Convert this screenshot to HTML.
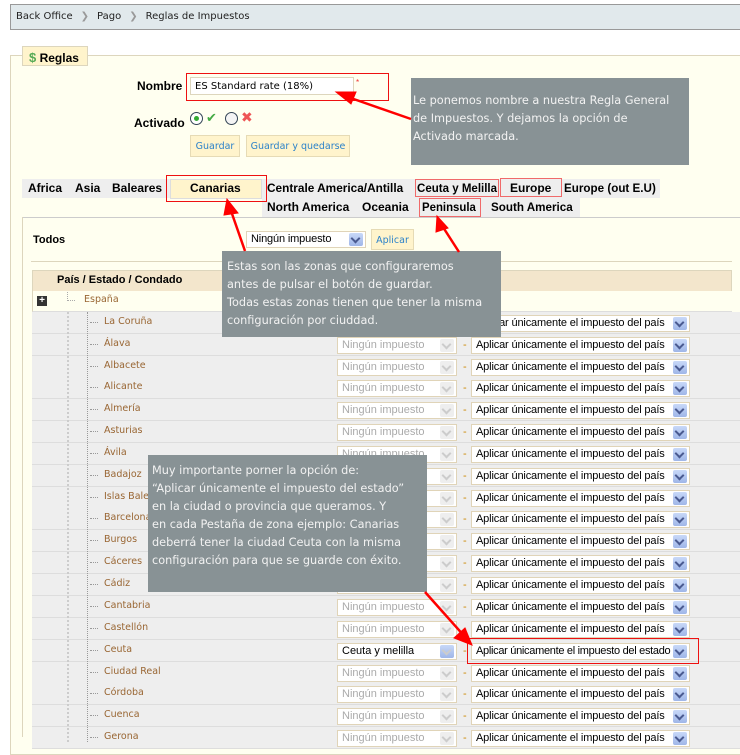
<!DOCTYPE html>
<html><head><meta charset="utf-8"><style>
*{margin:0;padding:0;box-sizing:border-box}
body{width:740px;height:736px;overflow:hidden;background:#fff;font-family:"Liberation Sans","DejaVu Sans",sans-serif;font-size:11px;color:#000;position:relative}
.a{position:absolute}
.bc{left:10px;top:4px;width:740px;height:26px;background:#e1e9ec;border:1px solid #999;border-right:none;font-family:"DejaVu Sans",sans-serif;font-size:10px;padding:6px 0 0 5px;color:#222}
.bc span{color:#999;font-weight:bold;margin:0 8px}
.fs{left:10px;top:55px;width:740px;height:700px;background:#fffff0;border:1px solid #ddd6bd;border-right:none}
.lg{left:22px;top:46px;width:66px;height:20px;background:#fff4cc;border:1px solid #ddd6bd;font-weight:bold;font-size:12px;padding:3px 0 0 6px}
.lbl{font-weight:bold;font-size:12px}
.inp{background:#fff;border:1px solid #ddd6bd;font-family:"DejaVu Sans",sans-serif;font-size:10px;padding:3px 4px}
.btn{background:#fff4cc;border:1px solid #e6dbb5;color:#2c82c9;font-family:"DejaVu Sans",sans-serif;font-size:9.5px;text-align:center;padding-top:5px}
.tip{background:#889295;color:#f2f2f2;font-family:"DejaVu Sans",sans-serif;font-size:11.3px;line-height:18px;white-space:nowrap;overflow:hidden}
.red{border:1.5px solid #ee1111}
.redl{border:1.5px solid #f06a6a}
.tab,.tab2{font-weight:bold;font-size:12px;white-space:nowrap;transform-origin:0 0}
.tab{top:181px}
.tab2{top:200px}
.row{left:32px;width:708px;height:22px;background:#eee;border-bottom:1px solid #ddd}
.pn{position:absolute;left:72px;top:4px;color:#996633;font-family:"DejaVu Sans",sans-serif;font-size:9.5px}
.dash{position:absolute;left:58px;top:10px;width:8px;border-top:1px dotted #999}
.s1{position:absolute;left:305px;top:3px;width:120px;height:17px;background:#fff;border:1px solid #e0d4b8;color:#aaa;font-size:11px;padding:1px 4px}
.s1 i,.s2 i{position:absolute;right:2px;top:1px;width:14px;height:13px;background:#dde;border-radius:2px}
.s1 i{background:#eee}
.s2 i{background:linear-gradient(#c8d8f8,#9fb6e8)}
.s1 i:after,.s2 i:after{content:"";position:absolute;left:3px;top:2px;width:5px;height:5px;border-right:2px solid #4a5a90;border-bottom:2px solid #4a5a90;transform:rotate(45deg)}
.s1 i:after{border-color:#ccc}
.s2{position:absolute;left:439px;top:3px;width:219px;height:17px;background:#fff;border:1px solid #e0d4b8;font-size:11px;padding:1px 4px;white-space:nowrap;overflow:hidden;letter-spacing:-0.15px}
.dh{position:absolute;left:431px;top:5px;color:#c80}
</style></head><body>
<div class="a bc">Back Office<span>&#x276F;</span>Pago<span>&#x276F;</span>Reglas de Impuestos</div>
<div class="a fs"></div>
<div class="a lg"><span style="color:#5a5;font-size:13px">$</span> Reglas</div>

<div class="a lbl" style="left:137px;top:79px">Nombre</div>
<div class="a inp" style="left:190px;top:77px;width:164px;height:18px">ES Standard rate (18%)</div>
<div class="a" style="left:356px;top:78px;color:#e33;font-size:8px">*</div>
<div class="a red" style="left:186px;top:73px;width:203px;height:28px"></div>
<div class="a lbl" style="left:134px;top:116px">Activado</div>
<div class="a" style="left:190px;top:112px;width:13px;height:13px;border-radius:50%;border:1px solid #345;background:#fff"><div style="margin:3px;width:5px;height:5px;border-radius:50%;background:#3a3"></div></div>
<div class="a" style="left:206px;top:110px;color:#4a4;font-size:13px;font-weight:bold">&#x2714;</div>
<div class="a" style="left:225px;top:112px;width:13px;height:13px;border-radius:50%;border:1px solid #345;background:#f4f4f4"></div>
<div class="a" style="left:241px;top:109px;color:#e55;font-size:14px;font-weight:bold">&#x2716;</div>
<div class="a btn" style="left:190px;top:135px;width:50px;height:22px">Guardar</div>
<div class="a btn" style="left:246px;top:135px;width:104px;height:22px">Guardar y quedarse</div>

<div class="a tip" style="left:411px;top:78px;width:278px;height:87px;padding:14px 0 0 2px">Le ponemos nombre a nuestra Regla General<br>de Impuestos. Y dejamos la opción de<br>Activado marcada.</div>

<div class="a" style="left:22px;top:179px;width:638px;height:19px;background:#eee"></div>
<div class="a" style="left:262px;top:198px;width:318px;height:19px;background:#eee"></div>
<div class="a" style="left:170px;top:179px;width:92px;height:20px;background:#fff4cc;border:1px solid #ddd"></div>
<div class="a" style="left:22px;top:217px;width:718px;border-top:1px solid #ccc"></div>
<div class="a tab" style="left:28px">Africa</div>
<div class="a tab" style="left:75px">Asia</div>
<div class="a tab" style="left:112px">Baleares</div>
<div class="a tab" style="left:190px">Canarias</div>
<div class="a tab" style="left:267px;transform:scaleX(0.985)">Centrale America/Antilla</div>
<div class="a tab" style="left:417px;transform:scaleX(0.96)">Ceuta y Melilla</div>
<div class="a tab" style="left:510px">Europe</div>
<div class="a tab" style="left:564px;transform:scaleX(0.97)">Europe (out E.U)</div>
<div class="a tab2" style="left:267px">North America</div>
<div class="a tab2" style="left:362px">Oceania</div>
<div class="a tab2" style="left:422px;transform:scaleX(0.95)">Peninsula</div>
<div class="a tab2" style="left:491px;transform:scaleX(0.97)">South America</div>
<div class="a red" style="left:166px;top:175px;width:101px;height:27px"></div>
<div class="a redl" style="left:415px;top:179px;width:84px;height:18px"></div>
<div class="a redl" style="left:500px;top:178px;width:62px;height:19px"></div>
<div class="a redl" style="left:419px;top:198px;width:62px;height:19px"></div>

<div class="a" style="left:22px;top:217px;height:520px;border-left:1px solid #ddd6bd"></div>
<div class="a lbl" style="left:33px;top:234px;font-size:11px">Todos</div>
<div class="a s2" style="left:246px;top:231px;width:120px;height:17px;position:absolute">Ningún impuesto<i></i></div>
<div class="a btn" style="left:371px;top:229px;width:43px;height:21px">Aplicar</div>
<div class="a" style="left:31px;top:261px;width:701px;border-top:1px solid #ddd6bd"></div>

<div class="a" style="left:32px;top:270px;width:700px;height:21px;background:#f3e6cc;border:1px solid #ddd6bd;border-bottom:none"></div>
<div class="a lbl" style="left:57px;top:274px;font-size:11px">País / Estado / Condado</div>
<div class="a" style="left:32px;top:291px;width:700px;height:21px;background:#fffff0;border-left:1px solid #ddd6bd;border-bottom:1px solid #ddd"></div>
<div class="a" style="left:37px;top:296px;width:10px;height:10px;background:#333;color:#fff;font-size:10px;line-height:9px;text-align:center;font-weight:bold">+</div>
<div class="a" style="left:67px;top:292px;width:8px;height:9px;border-left:1px dotted #aaa;border-bottom:1px dotted #aaa"></div>
<div class="a" style="left:84px;top:294px;color:#996633;font-family:'DejaVu Sans',sans-serif;font-size:9.5px">España</div>
<div class="a" style="left:67px;top:312px;height:430px;border-left:2px dotted #ccc;z-index:2"></div>
<div class="a" style="left:87px;top:312px;height:430px;border-left:1px dotted #999;z-index:2"></div>

<div class="a row" style="top:312px"><div class="dash"></div><span class="pn">La Coruña</span><div class="s1">Ningún impuesto<i></i></div><span class="dh">-</span><div class="s2">Aplicar únicamente el impuesto del país<i></i></div></div>
<div class="a row" style="top:334px"><div class="dash"></div><span class="pn">Álava</span><div class="s1">Ningún impuesto<i></i></div><span class="dh">-</span><div class="s2">Aplicar únicamente el impuesto del país<i></i></div></div>
<div class="a row" style="top:356px"><div class="dash"></div><span class="pn">Albacete</span><div class="s1">Ningún impuesto<i></i></div><span class="dh">-</span><div class="s2">Aplicar únicamente el impuesto del país<i></i></div></div>
<div class="a row" style="top:377px"><div class="dash"></div><span class="pn">Alicante</span><div class="s1">Ningún impuesto<i></i></div><span class="dh">-</span><div class="s2">Aplicar únicamente el impuesto del país<i></i></div></div>
<div class="a row" style="top:399px"><div class="dash"></div><span class="pn">Almería</span><div class="s1">Ningún impuesto<i></i></div><span class="dh">-</span><div class="s2">Aplicar únicamente el impuesto del país<i></i></div></div>
<div class="a row" style="top:421px"><div class="dash"></div><span class="pn">Asturias</span><div class="s1">Ningún impuesto<i></i></div><span class="dh">-</span><div class="s2">Aplicar únicamente el impuesto del país<i></i></div></div>
<div class="a row" style="top:443px"><div class="dash"></div><span class="pn">Ávila</span><div class="s1">Ningún impuesto<i></i></div><span class="dh">-</span><div class="s2">Aplicar únicamente el impuesto del país<i></i></div></div>
<div class="a row" style="top:465px"><div class="dash"></div><span class="pn">Badajoz</span><div class="s1">Ningún impuesto<i></i></div><span class="dh">-</span><div class="s2">Aplicar únicamente el impuesto del país<i></i></div></div>
<div class="a row" style="top:487px"><div class="dash"></div><span class="pn">Islas Baleares</span><div class="s1">Ningún impuesto<i></i></div><span class="dh">-</span><div class="s2">Aplicar únicamente el impuesto del país<i></i></div></div>
<div class="a row" style="top:508px"><div class="dash"></div><span class="pn">Barcelona</span><div class="s1">Ningún impuesto<i></i></div><span class="dh">-</span><div class="s2">Aplicar únicamente el impuesto del país<i></i></div></div>
<div class="a row" style="top:530px"><div class="dash"></div><span class="pn">Burgos</span><div class="s1">Ningún impuesto<i></i></div><span class="dh">-</span><div class="s2">Aplicar únicamente el impuesto del país<i></i></div></div>
<div class="a row" style="top:552px"><div class="dash"></div><span class="pn">Cáceres</span><div class="s1">Ningún impuesto<i></i></div><span class="dh">-</span><div class="s2">Aplicar únicamente el impuesto del país<i></i></div></div>
<div class="a row" style="top:574px"><div class="dash"></div><span class="pn">Cádiz</span><div class="s1">Ningún impuesto<i></i></div><span class="dh">-</span><div class="s2">Aplicar únicamente el impuesto del país<i></i></div></div>
<div class="a row" style="top:596px"><div class="dash"></div><span class="pn">Cantabria</span><div class="s1">Ningún impuesto<i></i></div><span class="dh">-</span><div class="s2">Aplicar únicamente el impuesto del país<i></i></div></div>
<div class="a row" style="top:618px"><div class="dash"></div><span class="pn">Castellón</span><div class="s1">Ningún impuesto<i></i></div><span class="dh">-</span><div class="s2">Aplicar únicamente el impuesto del país<i></i></div></div>
<div class="a row" style="top:640px"><div class="dash"></div><span class="pn">Ceuta</span><div class="s1" style="color:#000">Ceuta y melilla<i style="background:linear-gradient(#c8d8f8,#9fb6e8)"></i></div><span class="dh">-</span><div class="s2" style="letter-spacing:-0.3px">Aplicar únicamente el impuesto del estado<i></i></div></div>
<div class="a row" style="top:662px"><div class="dash"></div><span class="pn">Ciudad Real</span><div class="s1">Ningún impuesto<i></i></div><span class="dh">-</span><div class="s2">Aplicar únicamente el impuesto del país<i></i></div></div>
<div class="a row" style="top:683px"><div class="dash"></div><span class="pn">Córdoba</span><div class="s1">Ningún impuesto<i></i></div><span class="dh">-</span><div class="s2">Aplicar únicamente el impuesto del país<i></i></div></div>
<div class="a row" style="top:705px"><div class="dash"></div><span class="pn">Cuenca</span><div class="s1">Ningún impuesto<i></i></div><span class="dh">-</span><div class="s2">Aplicar únicamente el impuesto del país<i></i></div></div>
<div class="a row" style="top:727px"><div class="dash"></div><span class="pn">Gerona</span><div class="s1">Ningún impuesto<i></i></div><span class="dh">-</span><div class="s2">Aplicar únicamente el impuesto del país<i></i></div></div>

<div class="a red" style="left:467px;top:638px;width:232px;height:26px;z-index:3"></div>

<div class="a tip" style="left:222px;top:251px;width:279px;height:86px;padding:7px 0 0 5px;z-index:4">Estas son las zonas que configuraremos<br>antes de pulsar el botón de guardar.<br>Todas estas zonas tienen que tener la misma<br>configuración por ciuddad.</div>
<div class="a tip" style="left:148px;top:455px;width:279px;height:137px;padding:7px 0 0 4px;z-index:4">Muy importante porner la opción de:<br>“Aplicar únicamente el impuesto del estado”<br>en la ciudad o provincia que queramos. Y<br>en cada Pestaña de zona ejemplo: Canarias<br>deberrá tener la ciudad Ceuta con la misma<br>configuración para que se guarde con éxito.</div>

<svg class="a" style="left:0;top:0;z-index:5" width="740" height="736">
<g stroke="#f00" stroke-width="2.5" fill="#f00">
<line x1="411" y1="119" x2="345" y2="96"/>
<polygon points="336,92 356,92 351,104" stroke-width="1"/>
<line x1="245" y1="251" x2="230" y2="208"/>
<polygon points="227,199 238,213 224,215" stroke-width="1"/>
<line x1="459" y1="252" x2="441" y2="224"/>
<polygon points="437,216 448,228 436,232" stroke-width="1"/>
<line x1="425" y1="592" x2="466" y2="638"/>
<polygon points="472,645 454,638 465,628" stroke-width="1"/>
</g></svg>
</body></html>
